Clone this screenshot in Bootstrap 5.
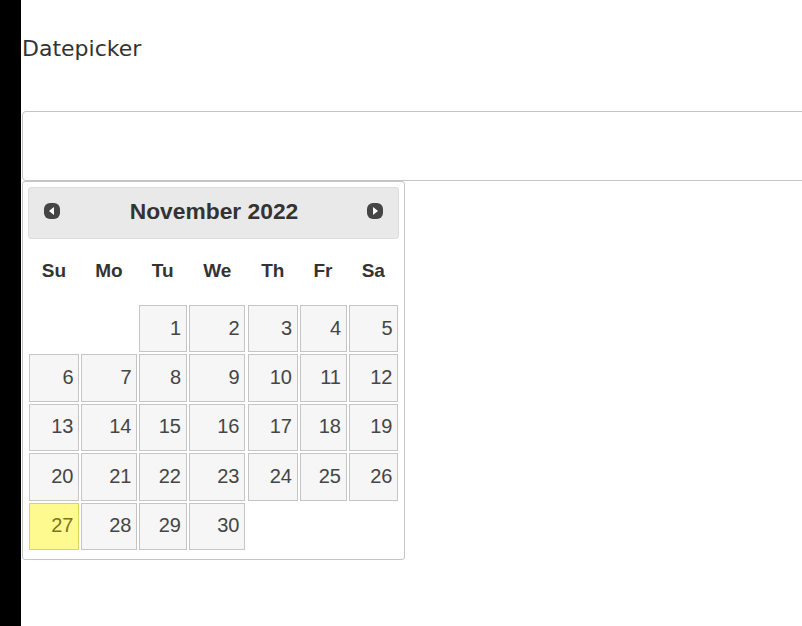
<!DOCTYPE html>
<html lang="en">
<head>
<meta charset="utf-8">
<title>Datepicker</title>
<link rel="stylesheet" href="https://cdn.jsdelivr.net/npm/bootstrap@5.3.0/dist/css/bootstrap.min.css">
<style>
html, body { height: 100%; overflow: hidden; background: #fff; }
.page-shell { height: 626px; width: 802px; overflow: hidden; }
.side-rail { width: 21px; flex: 0 0 21px; background: #000; }
.main-col { flex: 0 0 781px; min-width: 0; padding-left: 1px; }
.page-title { font-family: "DejaVu Sans", sans-serif; font-size: 22px; line-height: 26px; color: #333; margin: 0; padding: 36px 0 49px; font-weight: 400; }
.date-field { display: block; width: 800px; height: 70px; border: 1px solid #c5c5c5; border-radius: 4px; background: #fff; padding: 0 12px; }
.dp-widget { width: 383px; height: 379px; border: 1px solid #c5c5c5; border-radius: 3px; padding: 5px; font-family: "Liberation Sans", Arial, sans-serif; background: #fff; }
.dp-head { height: 52px; background: #e9e9e9; border: 1px solid #ddd; border-radius: 3px; color: #333; padding: 0 15px 4px; }
.dp-title { font-size: 22.8px; font-weight: 700; line-height: 1; margin-left: 1px; }
.dp-table { border-collapse: collapse; table-layout: fixed; width: 371px; font-size: 20px; }
.dp-table th { height: 65px; padding: 0 0 1px; text-align: center; font-weight: 700; font-size: 19px; color: #333; vertical-align: middle; }
.dp-table td { padding: 1px; height: 49.4px; }
.dp-table td:nth-child(4) { padding-right: 2px; }
.dp-day { display: flex; align-items: center; justify-content: flex-end; height: 47.4px; padding: 0 4.5px 2px 0; background: #f6f6f6; border: 1px solid #c5c5c5; color: #454545; text-decoration: none; }
.dp-today { background: #fffa90; border-color: #dad55e; color: #777620; }
.c1 { width: 52px; } .c2 { width: 58px; } .c3 { width: 49.5px; } .c4 { width: 59.5px; } .c5 { width: 51.5px; } .c6 { width: 49px; } .c7 { width: 51.5px; }
</style>
</head>
<body>
<div class="page-shell d-flex">
  <div class="side-rail"></div>
  <div class="main-col">
    <h1 class="page-title">Datepicker</h1>
    <input class="date-field" type="text" aria-label="Date">
    <div class="dp-widget">
      <div class="dp-head d-flex align-items-center justify-content-between">
        <svg width="16" height="16" viewBox="0 0 16 16" aria-hidden="true"><rect x="0" y="0" width="16" height="16" rx="6" fill="#454545"/><path d="M10 4v8L5 8z" fill="#fff"/></svg>
        <span class="dp-title">November 2022</span>
        <svg width="16" height="16" viewBox="0 0 16 16" aria-hidden="true"><rect x="0" y="0" width="16" height="16" rx="6" fill="#454545"/><path d="M6 4v8l5-4z" fill="#fff"/></svg>
      </div>
      <table class="dp-table">
        <colgroup><col class="c1"><col class="c2"><col class="c3"><col class="c4"><col class="c5"><col class="c6"><col class="c7"></colgroup>
        <thead><tr><th>Su</th><th>Mo</th><th>Tu</th><th>We</th><th>Th</th><th>Fr</th><th>Sa</th></tr></thead>
        <tbody>
          <tr><td></td><td></td><td><a class="dp-day" href="#">1</a></td><td><a class="dp-day" href="#">2</a></td><td><a class="dp-day" href="#">3</a></td><td><a class="dp-day" href="#">4</a></td><td><a class="dp-day" href="#">5</a></td></tr>
          <tr><td><a class="dp-day" href="#">6</a></td><td><a class="dp-day" href="#">7</a></td><td><a class="dp-day" href="#">8</a></td><td><a class="dp-day" href="#">9</a></td><td><a class="dp-day" href="#">10</a></td><td><a class="dp-day" href="#">11</a></td><td><a class="dp-day" href="#">12</a></td></tr>
          <tr><td><a class="dp-day" href="#">13</a></td><td><a class="dp-day" href="#">14</a></td><td><a class="dp-day" href="#">15</a></td><td><a class="dp-day" href="#">16</a></td><td><a class="dp-day" href="#">17</a></td><td><a class="dp-day" href="#">18</a></td><td><a class="dp-day" href="#">19</a></td></tr>
          <tr><td><a class="dp-day" href="#">20</a></td><td><a class="dp-day" href="#">21</a></td><td><a class="dp-day" href="#">22</a></td><td><a class="dp-day" href="#">23</a></td><td><a class="dp-day" href="#">24</a></td><td><a class="dp-day" href="#">25</a></td><td><a class="dp-day" href="#">26</a></td></tr>
          <tr><td><a class="dp-day dp-today" href="#">27</a></td><td><a class="dp-day" href="#">28</a></td><td><a class="dp-day" href="#">29</a></td><td><a class="dp-day" href="#">30</a></td><td></td><td></td><td></td></tr>
        </tbody>
      </table>
    </div>
  </div>
</div>
<script src="https://cdn.jsdelivr.net/npm/bootstrap@5.3.0/dist/js/bootstrap.bundle.min.js"></script>
</body>
</html>
